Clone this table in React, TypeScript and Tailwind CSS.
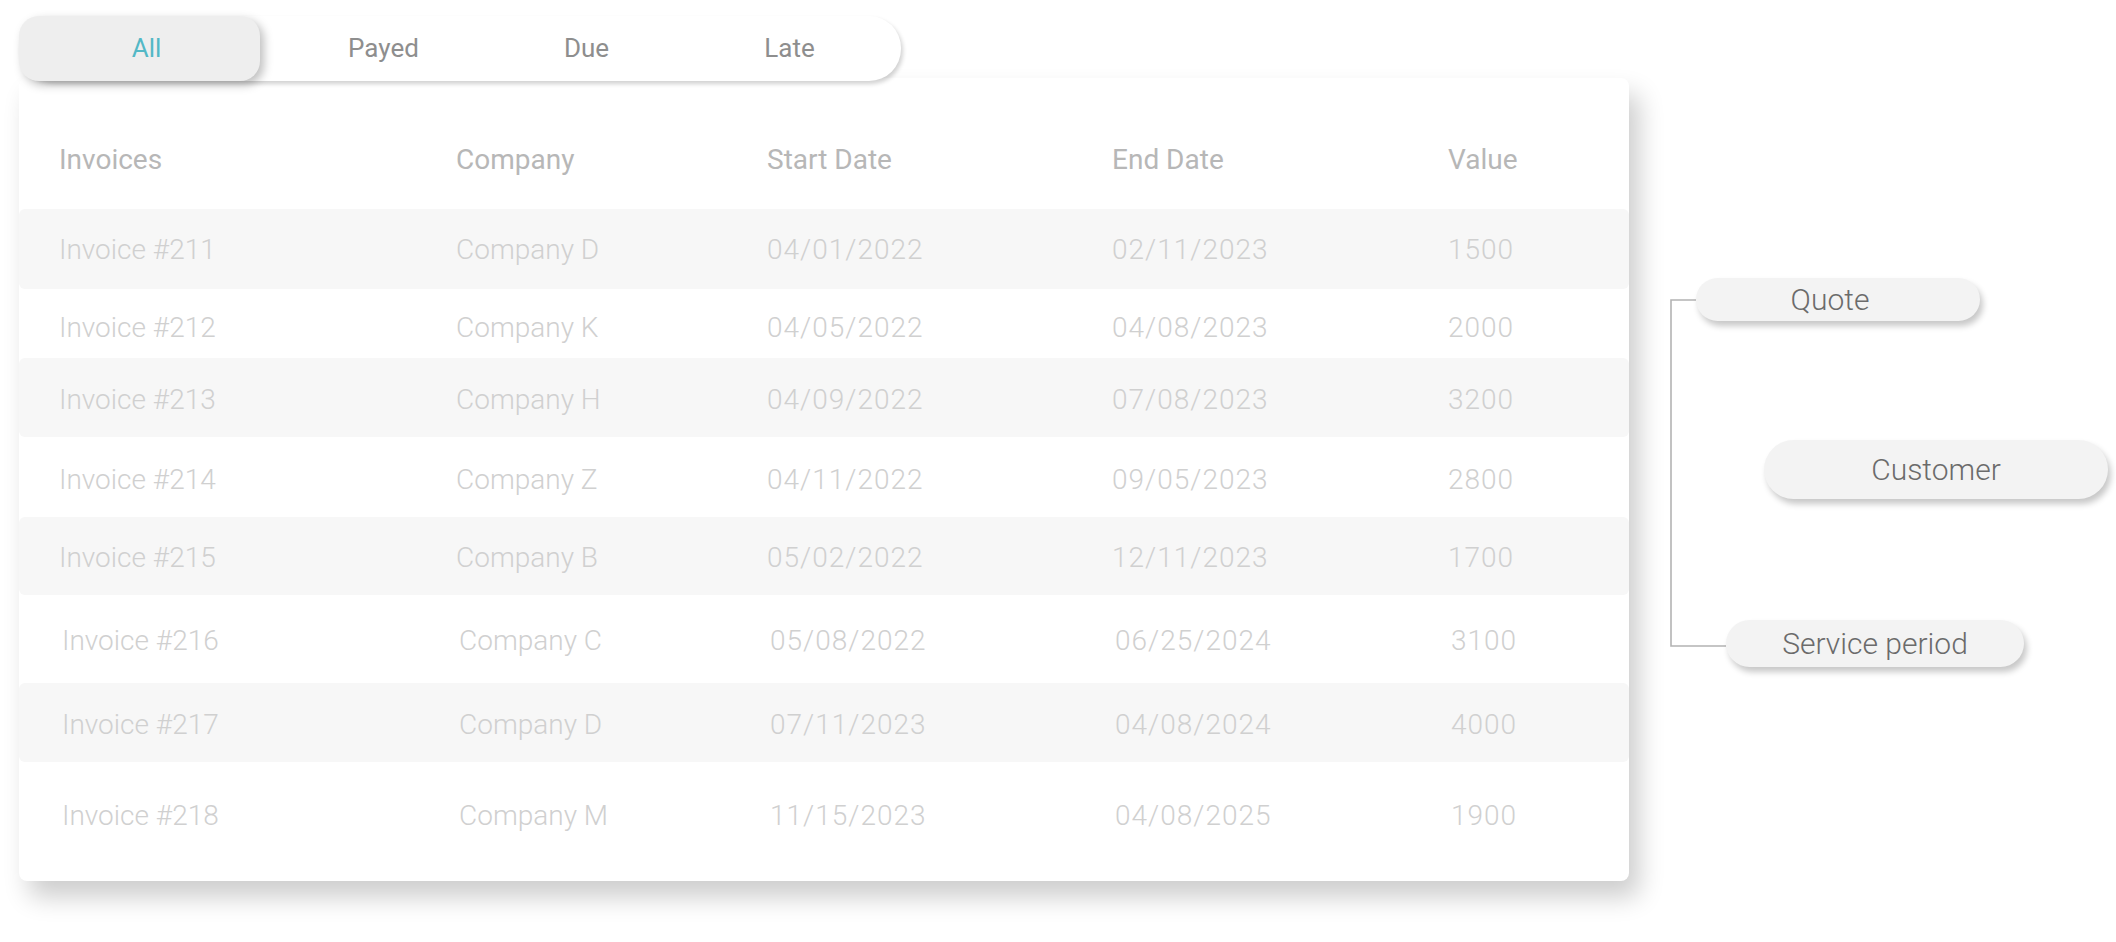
import React from 'react';

interface InvoiceRow {
  invoice: string;
  company: string;
  start: string;
  end: string;
  value: string;
  // row height + small nudges so the text sits like the mockup
  layout: string;
  striped: boolean;
}

const rows: InvoiceRow[] = [
  { invoice: 'Invoice #211', company: 'Company D', start: '04/01/2022', end: '02/11/2023', value: '1500', layout: 'h-[80px] pt-[2px] pl-[40px]', striped: true },
  { invoice: 'Invoice #212', company: 'Company K', start: '04/05/2022', end: '04/08/2023', value: '2000', layout: 'h-[69px] pt-[9px] pl-[40px]', striped: false },
  { invoice: 'Invoice #213', company: 'Company H', start: '04/09/2022', end: '07/08/2023', value: '3200', layout: 'h-[79px] pt-[5px] pl-[40px]', striped: true },
  { invoice: 'Invoice #214', company: 'Company Z', start: '04/11/2022', end: '09/05/2023', value: '2800', layout: 'h-[80px] pt-[5px] pl-[40px]', striped: false },
  { invoice: 'Invoice #215', company: 'Company B', start: '05/02/2022', end: '12/11/2023', value: '1700', layout: 'h-[78px] pt-[3px] pl-[40px]', striped: true },
  { invoice: 'Invoice #216', company: 'Company C', start: '05/08/2022', end: '06/25/2024', value: '3100', layout: 'h-[88px] pt-[3px] pl-[43px]', striped: false },
  { invoice: 'Invoice #217', company: 'Company D', start: '07/11/2023', end: '04/08/2024', value: '4000', layout: 'h-[79px] pt-[5px] pl-[43px]', striped: true },
  { invoice: 'Invoice #218', company: 'Company M', start: '11/15/2023', end: '04/08/2025', value: '1900', layout: 'h-[104px] pt-[3px] pl-[43px]', striped: false },
];

const tabs = ['Payed', 'Due', 'Late'];

const gridCols = 'grid grid-cols-[397px_311px_345px_336px_1fr]';

const TabBar: React.FC = () => (
  <div className="relative z-10 flex h-[65px] w-[882px] items-center rounded-[32px] bg-white shadow-[2px_3px_4px_rgba(0,0,0,0.18)] pr-[10px]">
    <div className="flex h-[65px] w-[241px] items-center justify-center rounded-[20px] bg-[#eeeeee] pl-[14px] text-[26px] text-[#53b8c6] shadow-[4px_4px_10px_rgba(0,0,0,0.25)]">
      All
    </div>
    <div className="ml-[22px] flex">
      {tabs.map((tab) => (
        <div key={tab} className="w-[203px] text-center text-[26px] text-[#8e8e8e]">
          {tab}
        </div>
      ))}
    </div>
  </div>
);

const InvoiceTable: React.FC = () => (
  <div className="-mt-[3px] w-[1610px] rounded-[8px] bg-white pb-[15px] shadow-[10px_16px_26px_rgba(0,0,0,0.2)]">
    <div className={`${gridCols} h-[131px] items-center pl-[40px] pt-[33px] text-[28px] text-[#b7b7b7]`}>
      <span>Invoices</span>
      <span>Company</span>
      <span>Start Date</span>
      <span>End Date</span>
      <span>Value</span>
    </div>
    {rows.map((row) => (
      <div
        key={row.invoice}
        className={`${gridCols} ${row.layout} items-center rounded-[6px] text-[28px] font-light text-[#d0d0d0] ${row.striped ? 'bg-[#f7f7f7]' : ''}`}
      >
        <span>{row.invoice}</span>
        <span>{row.company}</span>
        <span className="tracking-[1px]">{row.start}</span>
        <span className="tracking-[1px]">{row.end}</span>
        <span className="tracking-[1px]">{row.value}</span>
      </div>
    ))}
  </div>
);

const Pill: React.FC<{ label: string; className: string }> = ({ label, className }) => (
  <div
    className={`absolute flex items-center justify-center rounded-full bg-[#f3f3f3] text-[30px] font-light text-[#6b6b6b] shadow-[3px_5px_6px_rgba(0,0,0,0.22)] ${className}`}
  >
    {label}
  </div>
);

const FieldDiagram: React.FC = () => (
  <div className="relative h-[942px] flex-1">
    <svg className="absolute left-0 top-0" width="487" height="942">
      <path d="M67 300 H42 V646 H97" fill="none" stroke="#b3b3b3" strokeWidth="1.6" />
    </svg>
    <Pill label="Quote" className="left-[67px] top-[278px] h-[43px] w-[284px] pr-[16px]" />
    <Pill label="Customer" className="left-[135px] top-[440px] h-[59px] w-[344px]" />
    <Pill label="Service period" className="left-[97px] top-[620px] h-[47px] w-[298px]" />
  </div>
);

export default function App() {
  return (
    <div className="flex h-[942px] w-[2116px] overflow-hidden bg-white font-['Roboto',sans-serif]">
      <div className="w-[1629px] pl-[19px] pt-[16px]">
        <TabBar />
        <InvoiceTable />
      </div>
      <FieldDiagram />
    </div>
  );
}
